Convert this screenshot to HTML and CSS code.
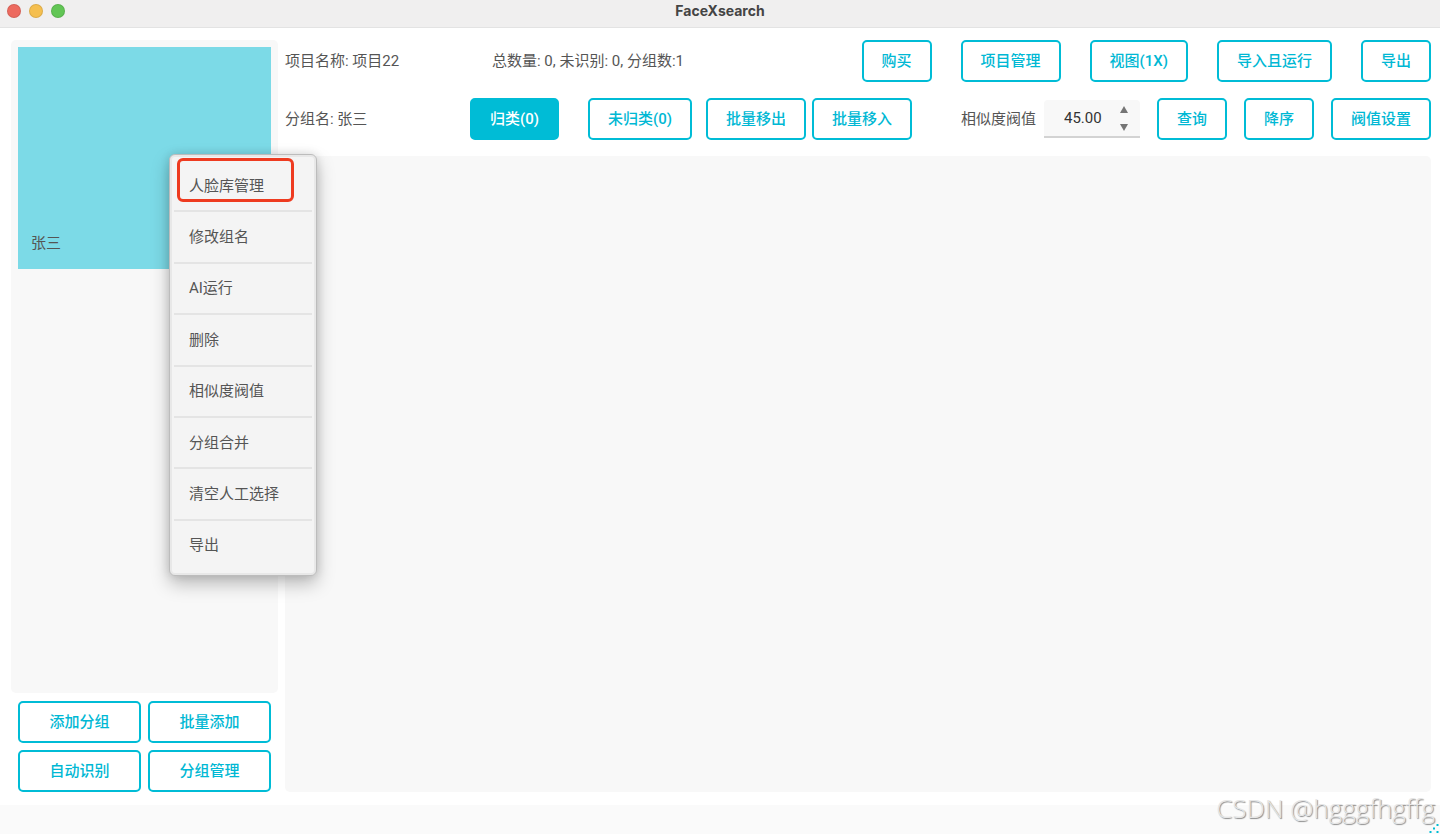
FILE: index.html
```html
<!DOCTYPE html>
<html lang="zh-CN">
<head>
<meta charset="utf-8">
<title>FaceXsearch</title>
<link rel="stylesheet" href="styles.css">
</head>
<body>
<header class="titlebar">
  <div class="lights"><span class="light close"></span><span class="light minimize"></span><span class="light zoom"></span></div>
  <h1 class="title">FaceXsearch</h1>
</header>
<div class="workspace">
  <aside class="sidebar">
    <div class="groups">
      <div class="group-card">
        <span class="group-name">张三</span>
        <div class="menu" role="menu">
          <button class="menu-item highlighted" role="menuitem">人脸库管理</button>
          <button class="menu-item" role="menuitem">修改组名</button>
          <button class="menu-item" role="menuitem">AI运行</button>
          <button class="menu-item" role="menuitem">删除</button>
          <button class="menu-item" role="menuitem">相似度阀值</button>
          <button class="menu-item" role="menuitem">分组合并</button>
          <button class="menu-item" role="menuitem">清空人工选择</button>
          <button class="menu-item" role="menuitem">导出</button>
        </div>
      </div>
    </div>
    <div class="group-actions">
      <button class="btn">添加分组</button>
      <button class="btn">批量添加</button>
      <button class="btn">自动识别</button>
      <button class="btn">分组管理</button>
    </div>
  </aside>
  <main class="main">
    <div class="toolbar">
      <span class="project">项目名称: 项目22</span>
      <span class="stats">总数量: 0, 未识别: 0, 分组数:1</span>
      <div class="project-actions">
        <button class="btn">购买</button>
        <button class="btn">项目管理</button>
        <button class="btn">视图(1X)</button>
        <button class="btn">导入且运行</button>
        <button class="btn">导出</button>
      </div>
    </div>
    <div class="toolbar">
      <span class="group-label">分组名: 张三</span>
      <div class="filters">
        <button class="btn active">归类(0)</button>
        <button class="btn">未归类(0)</button>
      </div>
      <div class="batch">
        <button class="btn">批量移出</button>
        <button class="btn">批量移入</button>
      </div>
      <div class="query">
        <div class="threshold">
          <label for="threshold">相似度阀值</label>
          <div class="spinner">
            <input id="threshold" class="spinner-value" type="text" value="45.00">
            <div class="steps">
              <button class="step" aria-label="增加"><svg width="8" height="7" viewBox="0 0 8 7"><path d="M4 0L8 7H0Z"/></svg></button>
              <button class="step" aria-label="减少"><svg width="8" height="7" viewBox="0 0 8 7"><path d="M0 0H8L4 7Z"/></svg></button>
            </div>
          </div>
        </div>
        <button class="btn">查询</button>
        <button class="btn">降序</button>
        <button class="btn">阀值设置</button>
      </div>
    </div>
    <section class="canvas"></section>
  </main>
</div>
<footer class="statusbar">
  <span class="watermark">CSDN @hgggfhgffg</span>
  <svg class="grip" width="10" height="10" viewBox="0 0 10 10"><path d="M7.500 0h2v2h-2zM4 3.500h2v2h-2zM7.500 7h2v2h-2zM0.500 7h2v2h-2z"/></svg>
</footer>
</body>
</html>
```
FILE: styles.css
```css
* { box-sizing: border-box; }
body {
  margin: 0;
  min-height: 100vh;
  display: flex;
  flex-direction: column;
  background: #fff;
  color: #555;
  font: 15px/20px Roboto, "Noto Sans CJK SC", sans-serif;
}
button, input { font: inherit; color: inherit; }
.titlebar {
  display: grid;
  grid-template-columns: 1fr auto 1fr;
  align-items: center;
  height: 28px;
  padding: 0 7px 6px;
  background: #f0efef;
  border-bottom: 1px solid #e3e3e3;
}
.lights { display: flex; gap: 8px; }
.light { width: 14px; height: 14px; border-radius: 50%; border: 1px solid #0000001a; }
.close { background: #ed6a5f; }
.minimize { background: #f5bf4f; }
.zoom { background: #62c655; }
.title { margin: 0; font: 700 14px/20px Inter, sans-serif; color: #444; }
.workspace { flex: 1; display: flex; gap: 7px; padding: 12px 9px 13px 11px; }
.sidebar { width: 267px; flex: none; display: flex; flex-direction: column; gap: 8px; }
.groups { flex: 1; padding: 7px; background: #f8f8f8; border-radius: 5px; }
.group-card {
  position: relative;
  display: flex;
  align-items: flex-end;
  height: 222px;
  padding: 16px 13px;
  background: #7cdae7;
}
.group-actions { display: grid; grid-template-columns: 1fr 1fr; gap: 7px; padding: 0 7px; }
.btn {
  height: 42px;
  padding: 0 18px;
  border: 2px solid #00bcd6;
  border-radius: 5px;
  background: #fff;
  color: #00b8d4;
  font-weight: 500;
  white-space: nowrap;
}
.btn.active { background: #00bcd6; color: #fff; }
.main { flex: 1; min-width: 0; display: flex; flex-direction: column; gap: 16px; }
.toolbar { display: flex; align-items: center; }
.project { width: 207px; }
.group-label { width: 185px; }
.project-actions { display: flex; gap: 29px; margin-left: auto; }
.filters { display: flex; gap: 29px; margin-right: 14px; }
.batch { display: flex; gap: 6px; }
.query { display: flex; align-items: center; gap: 17px; margin-left: auto; }
.threshold { display: flex; align-items: center; gap: 8px; }
.spinner {
  display: flex;
  width: 96px;
  height: 38px;
  background: #f8f8f8;
  border-bottom: 2px solid #d3d3d3;
  border-radius: 4px 4px 0 0;
}
.spinner-value { flex: 1; min-width: 0; padding: 0 0 0 20px; border: 0; background: none; color: #333; }
.steps { display: flex; flex-direction: column; width: 32px; }
.step { flex: 1; display: flex; align-items: center; justify-content: center; padding: 0; border: 0; background: none; }
.step svg { fill: #757575; }
.canvas { flex: 1; background: #f8f8f8; border-radius: 5px; }
.menu {
  position: absolute;
  z-index: 2;
  left: 151px;
  top: 107px;
  display: flex;
  flex-direction: column;
  width: 148px;
  min-height: 422px;
  padding: 6px 4px 5px;
  border: 1px solid #bcbcbc;
  border-radius: 6px;
  background: #f4f4f4;
  box-shadow: inset 0 0 0 2px #e8e8e8, 0 8px 18px #00000040, 0 0 10px #0000001f;
}
.menu-item { flex: 1; padding: 0 15px; border: 0; background: none; text-align: left; }
.menu-item + .menu-item { border-top: 2px solid #e4e4e4; }
.highlighted { position: relative; }
.highlighted::after {
  content: "";
  box-sizing: border-box;
  position: absolute;
  left: 3px;
  top: -3px;
  width: 117px;
  height: 44px;
  border: 3px solid #ee3b20;
  border-radius: 6px;
}
.statusbar { position: relative; height: 29px; background: #fafafa; }
.watermark {
  position: absolute;
  right: 5px;
  bottom: 9px;
  font: 300 26px/34px "Open Sans", sans-serif;
  color: #e6e6e6;
  text-shadow: 1px 1px 1px #888;
}
.grip { position: absolute; right: 1px; bottom: 0; fill: #00bcd4; }
```
